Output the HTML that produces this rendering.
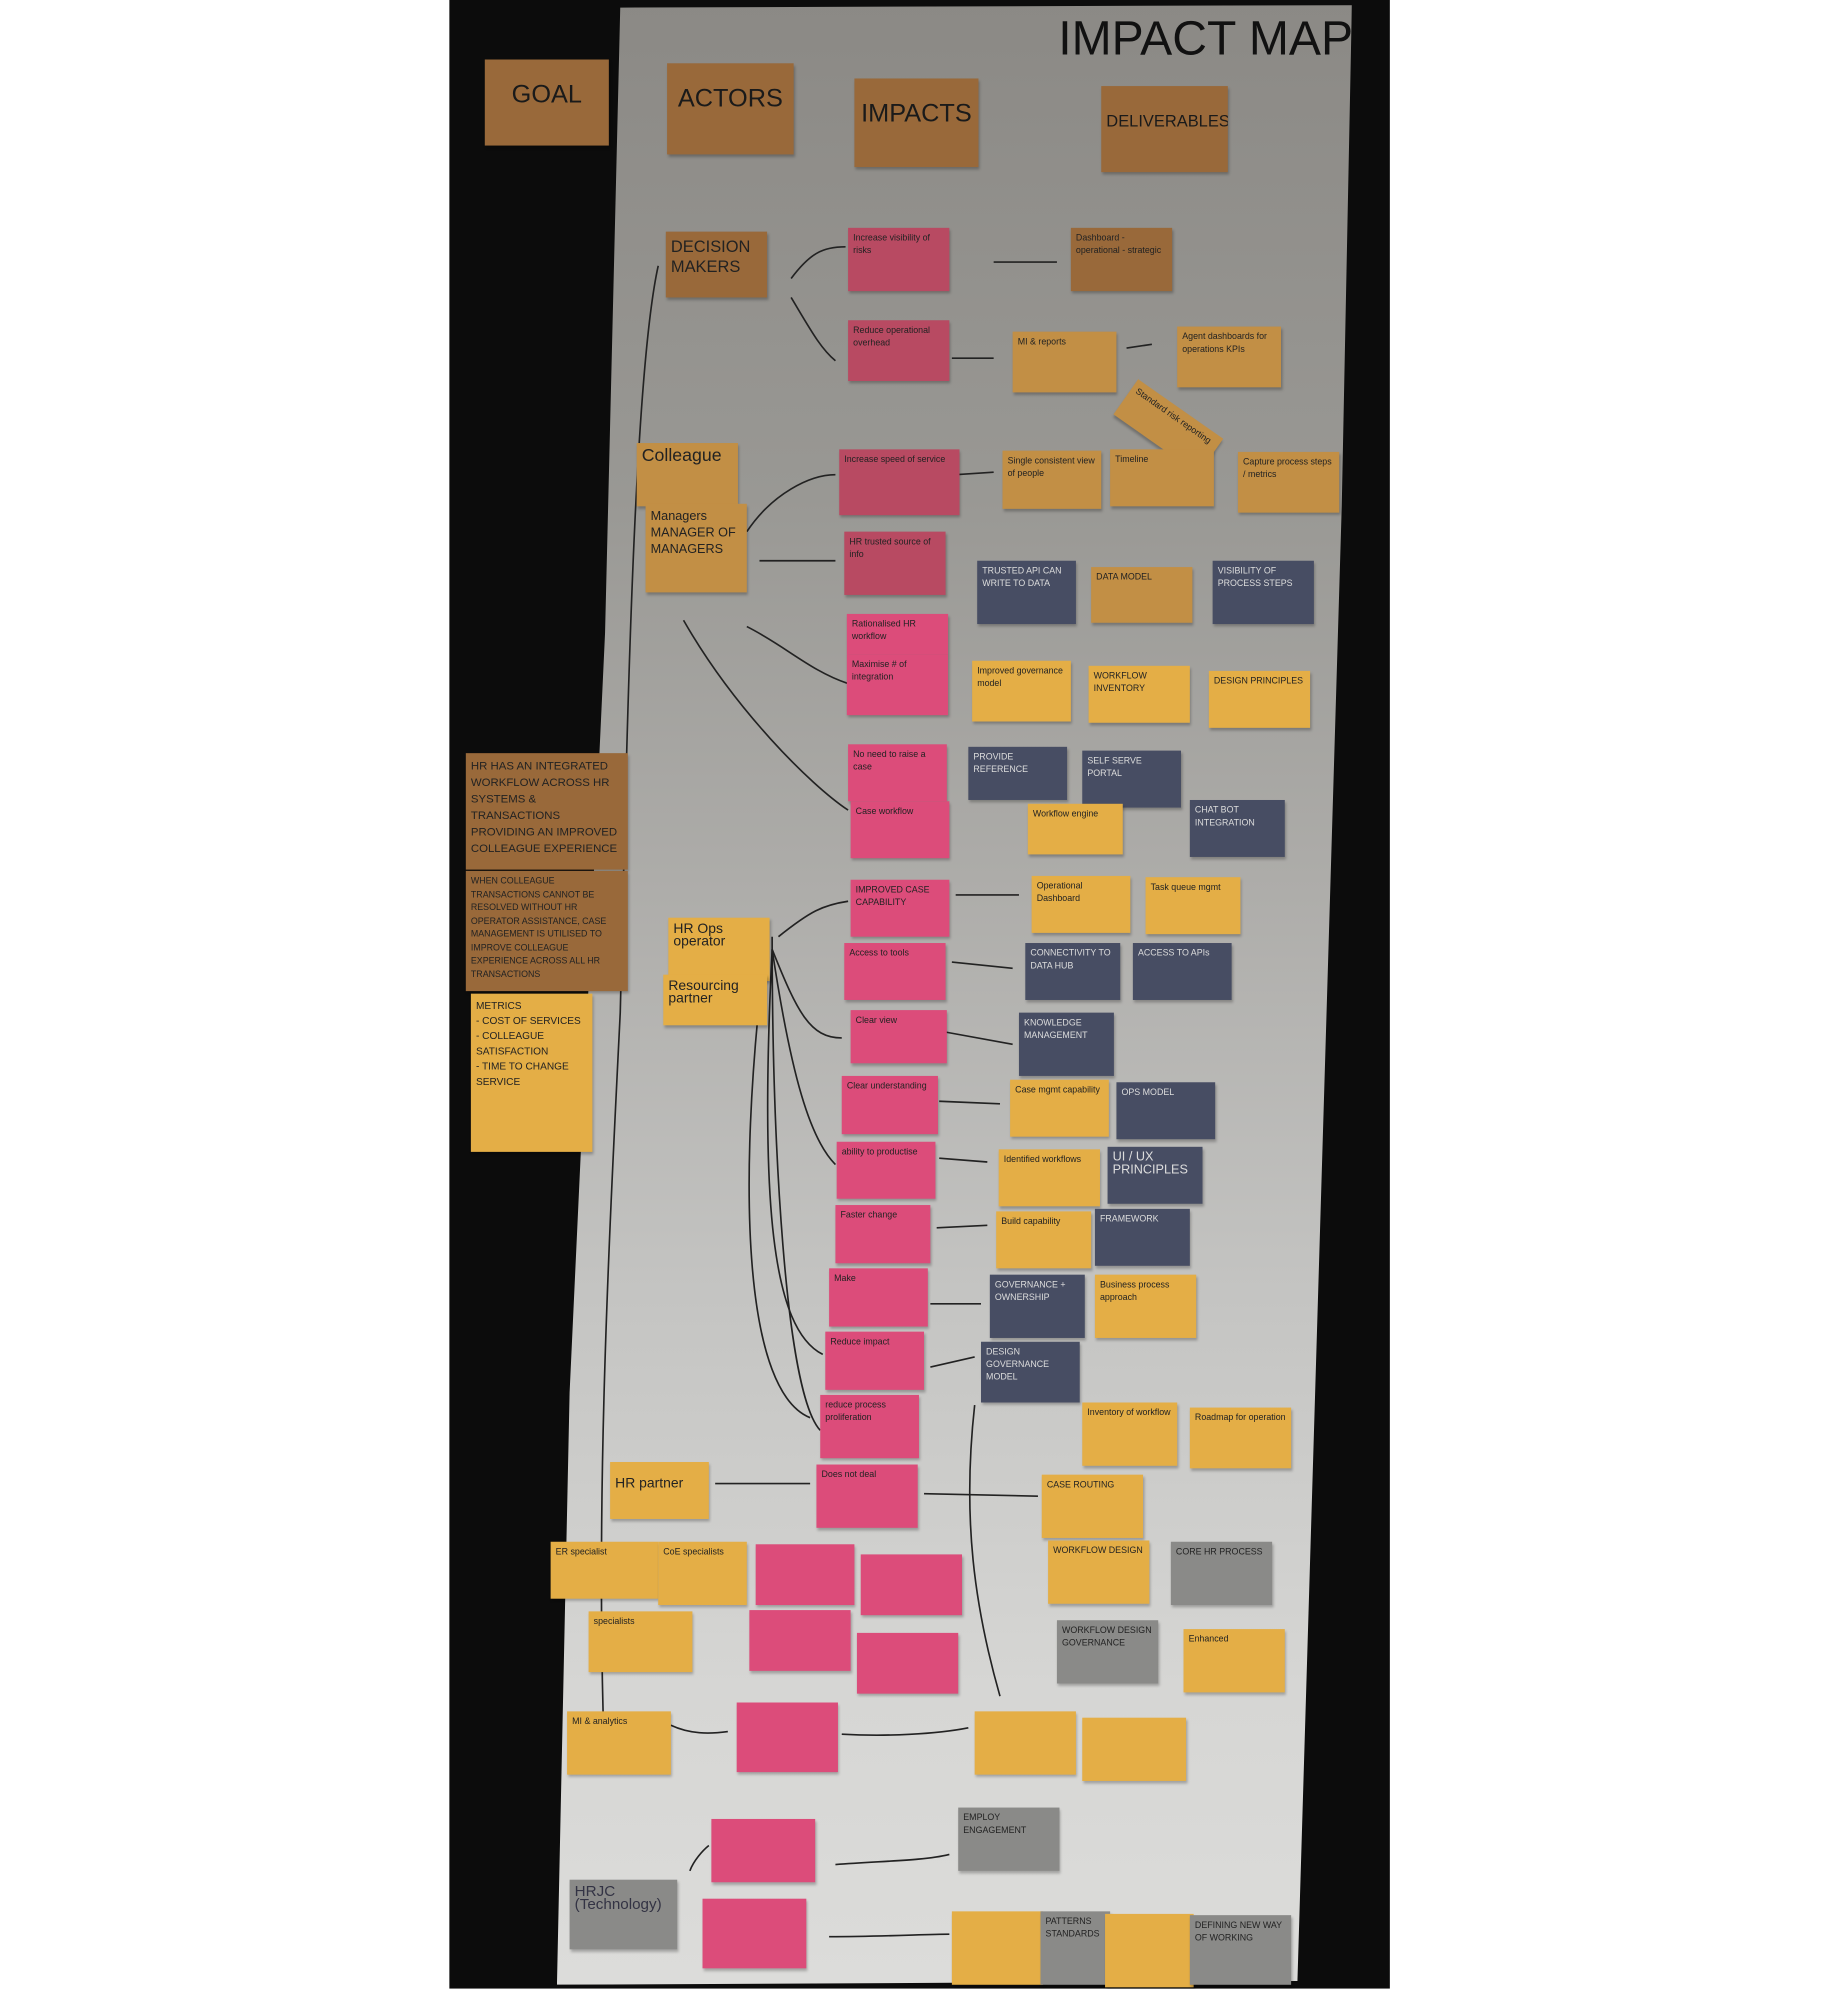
<!DOCTYPE html>
<html><head><meta charset="utf-8"><style>
html,body{margin:0;padding:0;width:1843px;height:1988px;overflow:hidden;background:#fff}
#w{position:absolute;left:0;top:0;width:1456px;height:1571px;transform:scale(1.2658);transform-origin:0 0}
#blk{position:absolute;left:355px;top:0;width:743px;height:1571px;background:#0c0c0c}
#paper{position:absolute;left:0;top:0;width:1456px;height:1571px;
clip-path:polygon(490px 6px,1068px 4px,1060px 400px,1045px 900px,1025px 1565px,440px 1568px,450px 1100px,478px 500px);
background:linear-gradient(#8b8985 0%,#999894 25%,#aeadaa 45%,#c4c4c2 65%,#d6d6d4 85%,#dcdcda 100%)}
.n{position:absolute;font-family:"Liberation Sans",sans-serif;color:#222;font-size:7px;line-height:10px;padding:4px;box-sizing:border-box;overflow:hidden;box-shadow:1px 2px 2px rgba(0,0,0,.25)}
.od{background:#99693a}.o{background:#e4ae46}.om{background:#c28f45}
.pd{background:#b84a62}.p{background:#dc4c7a}
.b{background:#474d63;color:#ddd}.g{background:#8a8a88}
.h{font-size:20px;line-height:24px;color:#1a1a1a;text-align:center;padding-top:16px}
svg{position:absolute;left:0;top:0}
</style></head><body><div id="w">
<div id="blk"></div>
<div id="paper"></div>
<svg width="1456" height="1571" fill="none" stroke="#222" stroke-width="1.3">
<path d="M520 210 C500 300 495 600 490 800 C480 1000 470 1200 478 1400"/>
<path d="M625 220 C640 200 650 195 668 195"/><path d="M625 235 C640 260 648 275 660 285"/>
<path d="M785 207 L835 207"/><path d="M752 283 L785 283"/><path d="M890 275 L910 272"/>
<path d="M590 420 C610 390 640 375 660 375"/><path d="M600 443 L660 443"/>
<path d="M755 375 L785 373"/><path d="M540 490 C580 560 640 620 670 640"/><path d="M590 495 C620 510 640 530 670 540"/>
<path d="M610 740 C610 900 620 1100 648 1130"/><path d="M610 750 C630 800 640 820 665 820"/>
<path d="M610 750 C625 850 640 900 660 920"/><path d="M610 750 C600 950 610 1050 650 1070"/>
<path d="M605 745 C580 950 590 1100 640 1120"/><path d="M615 740 C640 720 650 715 670 712"/>
<path d="M565 1172 L640 1172"/><path d="M730 1180 L820 1182"/><path d="M770 1110 C760 1200 770 1270 790 1340"/>
<path d="M755 707 L805 707"/><path d="M752 760 L800 765"/><path d="M745 815 L800 825"/>
<path d="M742 870 L790 872"/><path d="M742 915 L780 918"/><path d="M740 970 L780 968"/>
<path d="M735 1030 L775 1030"/><path d="M735 1080 L770 1072"/>
<path d="M530 1363 C545 1370 560 1370 575 1368"/><path d="M665 1370 C700 1372 740 1370 765 1365"/>
<path d="M660 1473 C700 1470 730 1470 750 1465"/><path d="M545 1478 C548 1470 555 1462 560 1458"/>
<path d="M655 1530 C700 1530 730 1528 750 1528"/>
</svg>
<div class="n" style="left:836px;top:6px;width:240px;height:60px;background:none;box-shadow:none;font-size:38px;line-height:50px;color:#111;white-space:nowrap;padding:0">IMPACT MAP</div>
<div class="n od h" style="left:383px;top:47px;width:98px;height:68px">GOAL</div>
<div class="n od h" style="left:527px;top:50px;width:100px;height:72px">ACTORS</div>
<div class="n od h" style="left:675px;top:62px;width:98px;height:70px">IMPACTS</div>
<div class="n od h" style="left:870px;top:68px;width:100px;height:68px;font-size:13px">DELIVERABLES</div>
<div class="n od" style="left:526px;top:183px;width:80px;height:52px;font-size:13px;line-height:16px">DECISION MAKERS</div>
<div class="n pd" style="left:670px;top:180px;width:80px;height:50px">Increase visibility of risks</div>
<div class="n od" style="left:846px;top:180px;width:80px;height:50px">Dashboard - operational - strategic</div>
<div class="n pd" style="left:670px;top:253px;width:80px;height:48px">Reduce operational overhead</div>
<div class="n om" style="left:800px;top:262px;width:82px;height:48px">MI &amp; reports</div>
<div class="n om" style="left:930px;top:258px;width:82px;height:48px">Agent dashboards for operations KPIs</div>
<div class="n om" style="left:882px;top:320px;width:82px;height:34px;transform:rotate(35deg)">Standard risk reporting</div>
<div class="n om" style="left:503px;top:350px;width:80px;height:50px;font-size:14px">Colleague</div>
<div class="n om" style="left:510px;top:398px;width:80px;height:70px;font-size:10px;line-height:13px">Managers<br>MANAGER OF MANAGERS</div>
<div class="n pd" style="left:663px;top:355px;width:95px;height:52px">Increase speed of service</div>
<div class="n om" style="left:792px;top:356px;width:78px;height:46px">Single consistent view of people</div>
<div class="n om" style="left:877px;top:355px;width:82px;height:45px">Timeline</div>
<div class="n om" style="left:978px;top:357px;width:80px;height:48px">Capture process steps / metrics</div>
<div class="n pd" style="left:667px;top:420px;width:80px;height:50px">HR trusted source of info</div>
<div class="n b" style="left:772px;top:443px;width:78px;height:50px">TRUSTED API CAN WRITE TO DATA</div>
<div class="n om" style="left:862px;top:448px;width:80px;height:44px">DATA MODEL</div>
<div class="n b" style="left:958px;top:443px;width:80px;height:50px">VISIBILITY OF PROCESS STEPS</div>
<div class="n p" style="left:669px;top:485px;width:80px;height:32px">Rationalised HR workflow</div>
<div class="n p" style="left:669px;top:517px;width:80px;height:48px">Maximise # of integration</div>
<div class="n o" style="left:768px;top:522px;width:78px;height:48px">Improved governance model</div>
<div class="n o" style="left:860px;top:526px;width:80px;height:45px">WORKFLOW INVENTORY</div>
<div class="n o" style="left:955px;top:530px;width:80px;height:45px">DESIGN PRINCIPLES</div>
<div class="n od" style="left:368px;top:595px;width:128px;height:92px;font-size:9px;line-height:13px">HR HAS AN INTEGRATED WORKFLOW ACROSS HR SYSTEMS &amp; TRANSACTIONS PROVIDING AN IMPROVED COLLEAGUE EXPERIENCE</div>
<div class="n od" style="left:368px;top:688px;width:128px;height:95px;font-size:7px;line-height:10.5px">WHEN COLLEAGUE TRANSACTIONS CANNOT BE RESOLVED WITHOUT HR OPERATOR ASSISTANCE, CASE MANAGEMENT IS UTILISED TO IMPROVE COLLEAGUE EXPERIENCE ACROSS ALL HR TRANSACTIONS</div>
<div class="n o" style="left:372px;top:785px;width:96px;height:125px;font-size:8px;line-height:12px">METRICS<br>- COST OF SERVICES<br>- COLLEAGUE SATISFACTION<br>- TIME TO CHANGE SERVICE</div>
<div class="n p" style="left:670px;top:588px;width:78px;height:45px">No need to raise a case</div>
<div class="n p" style="left:672px;top:633px;width:78px;height:45px">Case workflow</div>
<div class="n b" style="left:765px;top:590px;width:78px;height:42px">PROVIDE REFERENCE</div>
<div class="n b" style="left:855px;top:593px;width:78px;height:45px">SELF SERVE PORTAL</div>
<div class="n o" style="left:812px;top:635px;width:75px;height:40px">Workflow engine</div>
<div class="n b" style="left:940px;top:632px;width:75px;height:45px">CHAT BOT INTEGRATION</div>
<div class="n o" style="left:528px;top:725px;width:80px;height:50px;font-size:11px">HR Ops operator</div>
<div class="n o" style="left:524px;top:770px;width:82px;height:40px;font-size:11px">Resourcing partner</div>
<div class="n p" style="left:672px;top:695px;width:78px;height:45px">IMPROVED CASE CAPABILITY</div>
<div class="n p" style="left:667px;top:745px;width:80px;height:45px">Access to tools</div>
<div class="n o" style="left:815px;top:692px;width:78px;height:45px">Operational Dashboard</div>
<div class="n o" style="left:905px;top:693px;width:75px;height:45px">Task queue mgmt</div>
<div class="n b" style="left:810px;top:745px;width:75px;height:45px">CONNECTIVITY TO DATA HUB</div>
<div class="n b" style="left:895px;top:745px;width:78px;height:45px">ACCESS TO APIs</div>
<div class="n p" style="left:672px;top:798px;width:76px;height:42px">Clear view</div>
<div class="n b" style="left:805px;top:800px;width:75px;height:50px">KNOWLEDGE MANAGEMENT</div>
<div class="n p" style="left:665px;top:850px;width:76px;height:46px">Clear understanding</div>
<div class="n o" style="left:798px;top:853px;width:78px;height:45px">Case mgmt capability</div>
<div class="n b" style="left:882px;top:855px;width:78px;height:45px">OPS MODEL</div>
<div class="n p" style="left:661px;top:902px;width:78px;height:45px">ability to productise</div>
<div class="n o" style="left:789px;top:908px;width:80px;height:45px">Identified workflows</div>
<div class="n b" style="left:875px;top:906px;width:75px;height:45px;font-size:10px">UI / UX PRINCIPLES</div>
<div class="n p" style="left:660px;top:952px;width:75px;height:46px">Faster change</div>
<div class="n o" style="left:787px;top:957px;width:75px;height:45px">Build capability</div>
<div class="n b" style="left:865px;top:955px;width:75px;height:45px">FRAMEWORK</div>
<div class="n p" style="left:655px;top:1002px;width:78px;height:46px">Make</div>
<div class="n b" style="left:782px;top:1007px;width:75px;height:50px">GOVERNANCE + OWNERSHIP</div>
<div class="n o" style="left:865px;top:1007px;width:80px;height:50px">Business process approach</div>
<div class="n p" style="left:652px;top:1052px;width:78px;height:46px">Reduce impact</div>
<div class="n b" style="left:775px;top:1060px;width:78px;height:48px">DESIGN GOVERNANCE MODEL</div>
<div class="n p" style="left:648px;top:1102px;width:78px;height:50px">reduce process proliferation</div>
<div class="n o" style="left:855px;top:1108px;width:75px;height:50px">Inventory of workflow</div>
<div class="n o" style="left:940px;top:1112px;width:80px;height:48px">Roadmap for operation</div>
<div class="n o" style="left:482px;top:1155px;width:78px;height:45px;font-size:11px;padding-top:12px">HR partner</div>
<div class="n p" style="left:645px;top:1157px;width:80px;height:50px">Does not deal</div>
<div class="n o" style="left:823px;top:1165px;width:80px;height:50px">CASE ROUTING</div>
<div class="n o" style="left:435px;top:1218px;width:85px;height:45px">ER specialist</div>
<div class="n o" style="left:520px;top:1218px;width:70px;height:50px">CoE specialists</div>
<div class="n p" style="left:597px;top:1220px;width:78px;height:48px"></div>
<div class="n p" style="left:680px;top:1228px;width:80px;height:48px"></div>
<div class="n o" style="left:828px;top:1217px;width:80px;height:50px">WORKFLOW DESIGN</div>
<div class="n g" style="left:925px;top:1218px;width:80px;height:50px">CORE HR PROCESS</div>
<div class="n o" style="left:465px;top:1273px;width:82px;height:48px">specialists</div>
<div class="n p" style="left:592px;top:1272px;width:80px;height:48px"></div>
<div class="n p" style="left:677px;top:1290px;width:80px;height:48px"></div>
<div class="n g" style="left:835px;top:1280px;width:80px;height:50px">WORKFLOW DESIGN GOVERNANCE</div>
<div class="n o" style="left:935px;top:1287px;width:80px;height:50px">Enhanced</div>
<div class="n o" style="left:448px;top:1352px;width:82px;height:50px">MI &amp; analytics</div>
<div class="n p" style="left:582px;top:1345px;width:80px;height:55px"></div>
<div class="n o" style="left:770px;top:1352px;width:80px;height:50px"></div>
<div class="n o" style="left:855px;top:1357px;width:82px;height:50px"></div>
<div class="n p" style="left:562px;top:1437px;width:82px;height:50px"></div>
<div class="n g" style="left:757px;top:1428px;width:80px;height:50px">EMPLOY ENGAGEMENT</div>
<div class="n g" style="left:450px;top:1485px;width:85px;height:55px;font-size:12px;color:#334">HRJC (Technology)</div>
<div class="n p" style="left:555px;top:1500px;width:82px;height:55px"></div>
<div class="n o" style="left:752px;top:1510px;width:72px;height:58px"></div>
<div class="n g" style="left:822px;top:1510px;width:55px;height:58px">PATTERNS STANDARDS</div>
<div class="n o" style="left:873px;top:1512px;width:70px;height:58px"></div>
<div class="n g" style="left:940px;top:1513px;width:80px;height:55px">DEFINING NEW WAY OF WORKING</div>
</div></body></html>
